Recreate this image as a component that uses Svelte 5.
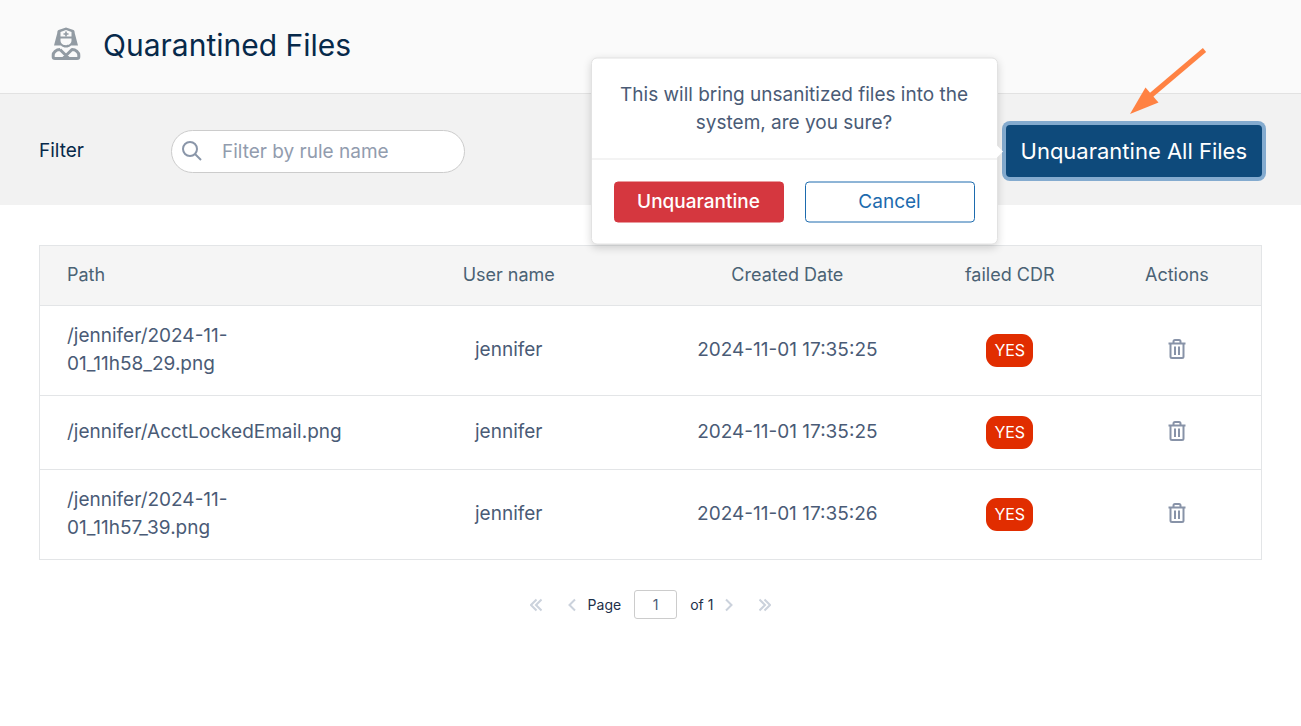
<script lang="ts">
	interface QuarantinedFile {
		path: string;
		user: string;
		createdAt: string;
		failedCdr: boolean;
	}

	let files: QuarantinedFile[] = $state([
		{ path: '/jennifer/2024-11-01_11h58_29.png', user: 'jennifer', createdAt: '2024-11-01 17:35:25', failedCdr: true },
		{ path: '/jennifer/AcctLockedEmail.png', user: 'jennifer', createdAt: '2024-11-01 17:35:25', failedCdr: true },
		{ path: '/jennifer/2024-11-01_11h57_39.png', user: 'jennifer', createdAt: '2024-11-01 17:35:26', failedCdr: true }
	]);

	let filter = $state('');
	let page = $state('1');
	let confirmOpen = $state(true);

	const pageCount = 1;

	let visibleFiles = $derived(files.filter((file) => file.path.toLowerCase().includes(filter.toLowerCase())));

	function removeFile(path: string) {
		files = files.filter((file) => file.path !== path);
	}

	function unquarantineAll() {
		files = [];
		confirmOpen = false;
	}
</script>

<div class="page">
	<header class="page-header">
		<svg width="30" height="38" viewBox="0 0 30 38" aria-hidden="true">
			<path fill="#929ba3" fill-rule="evenodd" d="M15 0.500 L22.500 3 C23.500 3.500 23.700 4.500 23.700 6 L27 18.500 H20 C18.500 20 17 20.500 15 20.500 C13 20.500 11.500 20 10 18.500 H3 L6.300 6 C6.300 4.500 6.500 3.500 7.500 3 Z M15 3 L9.500 5 V9.500 H20.500 V5 Z M9.500 11.500 V13.500 C9.500 16.500 12 18.200 15 18.200 C18 18.200 20.500 16.500 20.500 13.500 V11.500 Z" />
			<path stroke="#929ba3" stroke-width="1.600" d="M15 4.500 V9.500 M12.500 7 H17.500" />
			<path fill="none" stroke="#929ba3" stroke-width="3" stroke-linejoin="round" d="M9 22.500 C5 22.500 2.200 25.500 2.200 28 V30 C2.200 31 3 31.500 4 31.500 H26 C27 31.500 27.800 31 27.800 30 V28 C27.800 25.500 25 22.500 21 22.500 L12.500 31 M9 22.500 L17.500 31" />
		</svg>
		<h1>Quarantined Files</h1>
	</header>

	<section class="toolbar">
		<label class="filter-label" for="rule-filter">Filter</label>
		<div class="search">
			<svg width="20" height="20" viewBox="0 0 20 20" aria-hidden="true">
				<circle cx="8" cy="8" r="7" />
				<path d="M13 13 L19 19" />
			</svg>
			<input id="rule-filter" type="text" placeholder="Filter by rule name" bind:value={filter} />
		</div>

		<div class="unquarantine">
			<button type="button" class="btn-all" onclick={() => (confirmOpen = !confirmOpen)}>Unquarantine All Files</button>

			{#if confirmOpen}
				<div class="popover" role="dialog" aria-label="Confirm unquarantine">
					<p>This will bring unsanitized files into the system, are you sure?</p>
					<div class="popover-actions">
						<button type="button" class="btn-danger" onclick={unquarantineAll}>Unquarantine</button>
						<button type="button" class="btn-cancel" onclick={() => (confirmOpen = false)}>Cancel</button>
					</div>
				</div>
			{/if}

			<svg class="pointer" width="78" height="70" viewBox="0 0 78 70" aria-hidden="true">
				<path stroke="#ff8243" stroke-width="5" d="M75.500 3 L20 50" />
				<path fill="#ff8243" d="M1 67 L16.500 40.500 L29.500 55.500 Z" />
			</svg>
		</div>
	</section>

	<main>
		<table>
			<thead>
				<tr>
					<th class="col-path">Path</th>
					<th class="col-user">User name</th>
					<th class="col-date">Created Date</th>
					<th class="col-cdr">failed CDR</th>
					<th>Actions</th>
				</tr>
			</thead>
			<tbody>
				{#each visibleFiles as file (file.path)}
					<tr>
						<td class="col-path">{file.path}</td>
						<td>{file.user}</td>
						<td>{file.createdAt}</td>
						<td><span class="badge">{file.failedCdr ? 'YES' : 'NO'}</span></td>
						<td>
							<button type="button" class="btn-delete" aria-label="Delete {file.path}" onclick={() => removeFile(file.path)}>
								<svg width="18" height="24" viewBox="0 0 18 24" aria-hidden="true">
									<path d="M0.500 4.500 H17.500 M5.500 4 V2.500 Q5.500 1 7 1 H11 Q12.500 1 12.500 2.500 V4 M2.500 4.500 V17.500 Q2.500 19 4 19 H14 Q15.500 19 15.500 17.500 V4.500 M7 7.500 V16 M11 7.500 V16" />
								</svg>
							</button>
						</td>
					</tr>
				{/each}
			</tbody>
		</table>

		<nav class="pagination" aria-label="Pagination">
			<button type="button" aria-label="First page">
				<svg width="12" height="14" viewBox="0 0 12 14"><path d="M6.500 1.500 L1 7 L6.500 12.500 M11.500 1.500 L6 7 L11.500 12.500" /></svg>
			</button>
			<button type="button" class="prev" aria-label="Previous page">
				<svg width="8" height="14" viewBox="0 0 8 14"><path d="M7 1.500 L1.500 7 L7 12.500" /></svg>
			</button>
			<label for="page-number">Page</label>
			<input id="page-number" type="text" bind:value={page} />
			<span>of {pageCount}</span>
			<button type="button" class="next" aria-label="Next page">
				<svg width="8" height="14" viewBox="0 0 8 14"><path d="M1 1.500 L6.500 7 L1 12.500" /></svg>
			</button>
			<button type="button" aria-label="Last page">
				<svg width="12" height="14" viewBox="0 0 12 14"><path d="M0.500 1.500 L6 7 L0.500 12.500 M5.500 1.500 L11 7 L5.500 12.500" /></svg>
			</button>
		</nav>
	</main>
</div>

<style>
	:global(body) {
		margin: 0;
		background: #fff;
	}

	.page {
		font-family: Inter, 'Liberation Sans', sans-serif;
		font-size: 19px;
		line-height: 28px;
		color: #4a5b76;
	}

	.page *,
	.page *::before {
		box-sizing: border-box;
	}

	button,
	input {
		font: inherit;
	}

	button {
		cursor: pointer;
	}

	.page-header {
		display: flex;
		align-items: center;
		gap: 22px;
		padding: 23px 51px 25px;
		background: #fafafa;
		border-bottom: 1px solid #e2e2e2;
	}

	h1 {
		margin: 0;
		font-size: 30px;
		font-weight: 400;
		line-height: 45px;
		color: #07294a;
	}

	.toolbar {
		display: flex;
		align-items: center;
		padding: 31px 39px 28px;
		background: #f2f2f2;
	}

	.filter-label {
		width: 132px;
		color: #07294a;
	}

	.search {
		display: flex;
		align-items: center;
		gap: 20px;
		width: 294px;
		height: 43px;
		padding: 0 10px;
		border: 1px solid #ccc;
		border-radius: 22px;
		background: #fff;
	}

	.search svg {
		flex: none;
		fill: none;
		stroke: #8a96a9;
		stroke-width: 2;
	}

	.search input {
		flex: 1;
		min-width: 0;
		padding: 2px 0 0;
		border: 0;
		outline: 0;
		background: none;
		color: #4a5b76;
	}

	.search input::placeholder {
		color: #929cae;
		opacity: 1;
	}

	.unquarantine {
		position: relative;
		margin-left: auto;
	}

	.btn-all {
		display: block;
		padding: 12px 15px;
		border: 0;
		border-radius: 4px;
		box-shadow: 0 0 0 4px #84abcf;
		background: #0e4a7b;
		color: #fff;
		font-size: 22px;
	}

	.popover {
		position: absolute;
		top: 50%;
		right: calc(100% + 8px);
		z-index: 2;
		width: 407px;
		transform: translateY(-50%);
		border: 1px solid #e2e2e2;
		border-radius: 6px;
		box-shadow: 0 3px 8px rgba(0, 0, 0, 0.16);
		background: #fff;
	}

	.popover::before {
		content: '';
		position: absolute;
		top: 50%;
		left: 100%;
		margin-top: -6px;
		border: 6px solid transparent;
		border-left-color: #fff;
		border-right-width: 0;
	}

	.popover p {
		margin: 0;
		padding: 22px;
		border-bottom: 1px solid #e8e8e8;
		text-align: center;
	}

	.popover-actions {
		display: flex;
		gap: 21px;
		padding: 22px 22px 21px;
	}

	.popover-actions button {
		flex: 1;
		padding: 5px 5px 6px;
		border: 1px solid;
		border-radius: 4px;
	}

	.popover-actions .btn-danger {
		border-color: #d5373f;
		background: #d5373f;
		color: #fff;
		font-weight: 500;
	}

	.popover-actions .btn-cancel {
		border-color: #1d6bae;
		background: #fff;
		color: #1d6bae;
	}

	.pointer {
		position: absolute;
		right: 55px;
		bottom: calc(100% + 8px);
		fill: none;
		pointer-events: none;
	}

	main {
		padding: 40px 39px;
	}

	table {
		width: 100%;
		table-layout: fixed;
		border-collapse: collapse;
		border: 1px solid #e3e5e7;
	}

	tr {
		border-bottom: 1px solid #e3e5e7;
	}

	th,
	td {
		padding: 15px 0 16px;
		font-weight: 400;
		text-align: center;
	}

	th {
		background: #f5f5f5;
		color: #4a6274;
		font-size: 18px;
	}

	td {
		height: 74px;
		padding: 16px 0 17px;
	}

	.col-path {
		width: 27%;
		padding-left: 27px;
		padding-right: 20px;
		text-align: left;
	}

	.col-user {
		width: 22.8%;
	}

	.col-date {
		width: 22.8%;
	}

	.col-cdr {
		width: 13.6%;
	}

	.badge {
		display: inline-block;
		padding: 2px 8px 3px;
		border-radius: 11px;
		background: #e12d00;
		color: #fff;
		font-size: 16px;
	}

	.btn-delete {
		padding: 0;
		border: 0;
		background: none;
		vertical-align: middle;
	}

	.btn-delete svg {
		display: block;
		fill: none;
		stroke: #8893a8;
		stroke-width: 2;
	}

	.pagination {
		display: flex;
		align-items: center;
		justify-content: center;
		margin-top: 30px;
		color: #1d2f49;
		font-size: 14px;
	}

	.pagination button {
		display: flex;
		padding: 0;
		border: 0;
		background: none;
	}

	.pagination .prev {
		margin: 0 12px 0 26px;
	}

	.pagination .next {
		margin: 0 26px 0 12px;
	}

	.pagination svg {
		fill: none;
		stroke: #cbd2dc;
		stroke-width: 2;
	}

	.pagination input {
		width: 43px;
		height: 29px;
		margin: 0 13px;
		padding: 0;
		border: 1px solid #ccc;
		border-radius: 3px;
		color: #4a5b76;
		text-align: center;
	}
</style>
